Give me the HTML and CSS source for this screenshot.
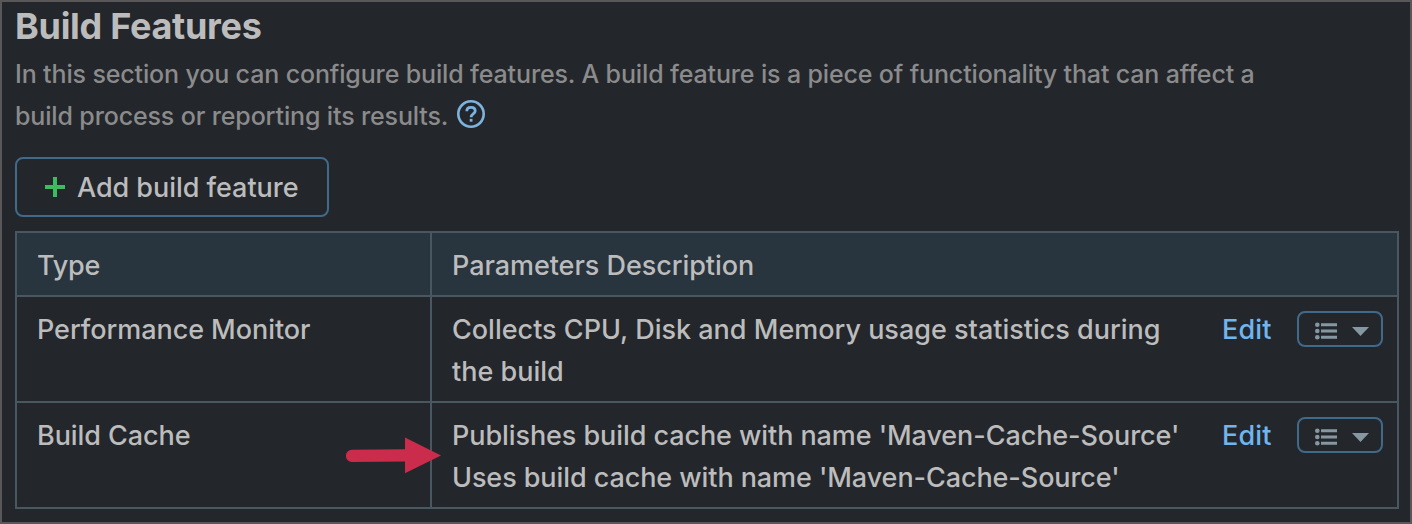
FILE: index.html
```
<!DOCTYPE html>
<html lang="en">
<head>
<meta charset="utf-8">
<title>Build Features</title>
<link rel="stylesheet" href="styles.css">
</head>
<body>
<main class="panel">
  <h2 class="title">Build Features</h2>
  <p class="desc">In this section you can configure build features. A build feature is a piece of functionality that can affect a<br>build process or reporting its results.<svg class="help" viewBox="0 0 28 28"><circle cx="14" cy="14" r="12.7" fill="none" stroke="currentColor" stroke-width="2.6"/><path d="M9.8 11.2C9.8 8.7 11.5 7.4 14 7.4s4.2 1.4 4.2 3.6c0 3-4.1 2.9-4.1 6.2" fill="none" stroke="currentColor" stroke-width="2.8"/><path d="M12.7 18.9h2.8v2.8h-2.8z" fill="currentColor"/></svg></p>
  <button class="add"><svg class="plus" viewBox="0 0 20 20"><path d="M8 0h4v8h8v4h-8v8H8v-8H0V8h8z" fill="currentColor"/></svg><span class="add-label">Add build feature</span></button>
  <section class="table">
    <div class="row head">
      <div class="cell type"><span class="t-type">Type</span></div>
      <div class="cell params"><span class="t-params">Parameters Description</span></div>
    </div>
    <div class="row">
      <div class="cell type"><span class="t-perf">Performance Monitor</span></div>
      <div class="cell params">
        <div class="text">Collects CPU, Disk and Memory usage statistics during<br>the build</div>
        <a class="edit">Edit</a>
        <button class="menu"><svg class="list" viewBox="0 0 22 18"><path d="M6 1.3h16v3H6zM6 7.5h16v3H6zM6 13.7h16v3H6z"/><circle cx="2.3" cy="2.8" r="2.3"/><circle cx="2.3" cy="9" r="2.3"/><circle cx="2.3" cy="15.2" r="2.3"/></svg><svg class="caret" viewBox="0 0 17 9"><path d="M0 0h17L8.5 9z"/></svg></button>
      </div>
    </div>
    <div class="row">
      <div class="cell type"><span class="t-cache">Build Cache</span>
        <svg class="arrow" viewBox="0 0 96 38"><path d="M6 12.7L59 12.2V.6L95 18.4 59 36.2V24.4L6 25a6.15 6.15 0 0 1 0-12.3z"/></svg>
      </div>
      <div class="cell params">
        <div class="text t-cache">Publishes build cache with name 'Maven-Cache-Source'<br>Uses build cache with name 'Maven-Cache-Source'</div>
        <a class="edit">Edit</a>
        <button class="menu"><svg class="list" viewBox="0 0 22 18"><path d="M6 1.3h16v3H6zM6 7.5h16v3H6zM6 13.7h16v3H6z"/><circle cx="2.3" cy="2.8" r="2.3"/><circle cx="2.3" cy="9" r="2.3"/><circle cx="2.3" cy="15.2" r="2.3"/></svg><svg class="caret" viewBox="0 0 17 9"><path d="M0 0h17L8.5 9z"/></svg></button>
      </div>
    </div>
  </section>
</main>
</body>
</html>
```

FILE: styles.css
```
* { box-sizing: border-box; }
body { margin: 0; background: #23262b; font-family: Inter, "Liberation Sans", sans-serif; font-weight: 450; color: #bcbcbc; }
.panel { width: 1412px; height: 524px; border: 2px solid #595757; padding: 2px 11px 0 13px; overflow: hidden; }
.title { margin: 0; font-size: 36px; line-height: 44px; font-weight: 750; letter-spacing: -0.3px; white-space: nowrap; }
.desc { margin: 5px 0 0; font-size: 25px; line-height: 42px; letter-spacing: -0.14px; color: #8b8b8b; white-space: nowrap; }
.help { width: 28px; height: 28px; margin-left: 9px; vertical-align: -3px; color: #7db3dd; overflow: visible; }
.add { display: flex; align-items: center; width: 314px; height: 60px; margin: 20px 0 14px; padding: 0 0 0 28px; border: 2px solid #41698a; border-radius: 8px; background: none; color: inherit; font: inherit; font-size: 27px; }
.plus { width: 20px; height: 20px; margin-right: 12px; color: #3dbb61; }
.add-label { white-space: nowrap; letter-spacing: -0.04px; }
.table { width: 1384px; border: 2px solid #495760; }
.row { display: flex; height: 106px; border-bottom: 2px solid #495760; }
.row:last-child { height: 104px; border-bottom: 0; }
.head { height: 64px; background: #28343e; }
.cell { display: flex; align-items: flex-start; padding: 12px 0 0 20px; font-size: 27px; line-height: 42px; white-space: nowrap; }
.type { position: relative; flex: none; width: 415px; border-right: 2px solid #495760; }
.params { flex: 1; padding-right: 14px; }
.text { flex: none; width: 770px; }
.t-params, .t-perf { letter-spacing: -0.05px; }
.t-cache { letter-spacing: -0.08px; }
.t-type { letter-spacing: -0.2px; }
.edit { flex: none; width: 75px; color: #70b5ee; letter-spacing: 0.2px; }
.menu { display: flex; flex: none; align-items: center; width: 86px; height: 36px; margin-top: 2px; padding: 4px 0 0 16px; border: 2px solid #41698a; border-radius: 8px; background: none; }
.list { width: 22px; height: 18px; fill: #8598a2; }
.caret { width: 17px; height: 9px; margin-left: 15px; fill: #8598a2; }
.arrow { position: absolute; left: 329px; top: 34px; width: 96px; height: 38px; fill: #cb2c4c; z-index: 1; }
```
